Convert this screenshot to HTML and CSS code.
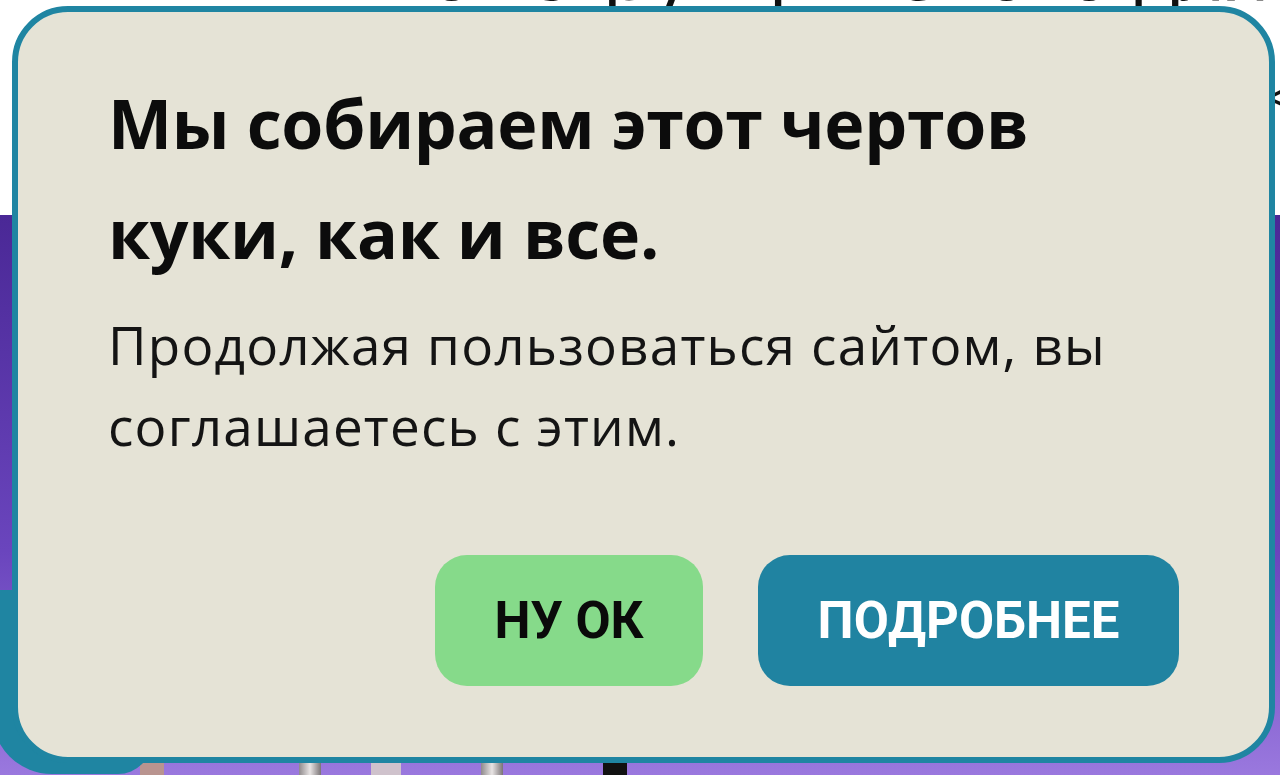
FILE: index.html
```
<!DOCTYPE html>
<html lang="ru">
	<head>
		<meta charset="UTF-8">
		<title>Куки</title>
		<meta name="viewport" content="width=device-width, initial-scale=1.0">
		<link rel="stylesheet" href="styles.css">
	</head>
	<body>
		<div class="page">
			<header class="hero">
				<h1 class="hero-title">конструкции этого для</h1>
				<span class="hero-arrow">&lt;</span>
			</header>
			<section class="promo">
				<div class="shelf">
					<span class="item item-rose"></span>
					<span class="item item-steel"></span>
					<span class="item item-pale"></span>
					<span class="item item-steel"></span>
					<span class="item item-dark"></span>
				</div>
			</section>
		</div>

		<div class="cookie-tail"></div>
		<div class="cookie" role="dialog">
			<h2 class="cookie-title">Мы собираем этот чертов куки, как и все.</h2>
			<p class="cookie-text">Продолжая пользоваться сайтом, вы соглашаетесь с этим.</p>
			<div class="cookie-actions">
				<button class="btn btn-ok" type="button">Ну ок</button>
				<button class="btn btn-more" type="button">Подробнее</button>
			</div>
		</div>
	</body>
</html>
```

FILE: styles.css
```
body {
	margin: 0;
	font-family: "Open Sans", "Noto Sans", sans-serif;
	overflow: hidden;
}
.page {
	height: 775px;
	display: flex;
	flex-direction: column;
}
.hero {
	height: 215px;
	background: #fff;
	overflow: hidden;
	display: flex;
	justify-content: flex-end;
}
.hero-title {
	margin: -86px -6px 0 0;
	font-size: 80px;
	font-weight: 400;
	line-height: 110px;
	color: #111;
	white-space: nowrap;
}
.hero-arrow {
	align-self: flex-start;
	margin: 66px -16px 0 0;
	font-size: 56px;
	line-height: 60px;
	color: #111;
}
.promo {
	flex: 1;
	display: flex;
	flex-direction: column;
	justify-content: flex-end;
	background: linear-gradient(180deg, #4a2896 0%, #6a45bd 60%, #9a78de 100%);
}
.shelf {
	height: 12px;
	display: flex;
	padding-left: 140px;
}
.item {
	display: block;
	height: 12px;
}
.item-rose {
	width: 24px;
	background: #b9948f;
	margin-right: 135px;
}
.item-steel {
	width: 22px;
	background: linear-gradient(90deg, #8f8a8c, #e8e4e4, #7a7476);
	margin-right: 50px;
}
.item-pale {
	width: 30px;
	background: #cfc2cc;
	margin-right: 80px;
}
.item-dark {
	width: 24px;
	background: #111;
	margin-left: 50px;
}

/* cookie banner */
.cookie-tail {
	position: absolute;
	left: -8px;
	top: 590px;
	width: 160px;
	height: 184px;
	border-radius: 0 0 34px 60px;
	background: #1f85a2;
}
.cookie {
	position: absolute;
	left: 12px;
	top: 6px;
	width: 1263px;
	height: 757px;
	box-sizing: border-box;
	padding: 56px 90px 71px 90px;
	border: 6px solid #1f85a2;
	border-radius: 56px;
	background: #e5e3d6;
	display: flex;
	flex-direction: column;
}
.cookie-title {
	margin: 0;
	max-width: 960px;
	font-size: 68px;
	font-weight: 700;
	letter-spacing: -0.3px;
	line-height: 110px;
	color: #0c0c0c;
}
.cookie-text {
	margin: 16px 0 0;
	max-width: 1080px;
	font-size: 53px;
	font-weight: 400;
	letter-spacing: 1.2px;
	line-height: 81px;
	color: #141414;
}
.cookie-actions {
	margin-top: auto;
	display: flex;
	justify-content: flex-end;
	gap: 55px;
}
.btn {
	height: 131px;
	border: 0;
	border-radius: 32px;
	font-family: Roboto, sans-serif;
	font-size: 51px;
	font-weight: 700;
	text-transform: uppercase;
}
.btn-ok {
	width: 268px;
	background: #86da8a;
	color: #0a0a0a;
}
.btn-more {
	width: 421px;
	background: #2083a1;
	color: #fff;
}
```
